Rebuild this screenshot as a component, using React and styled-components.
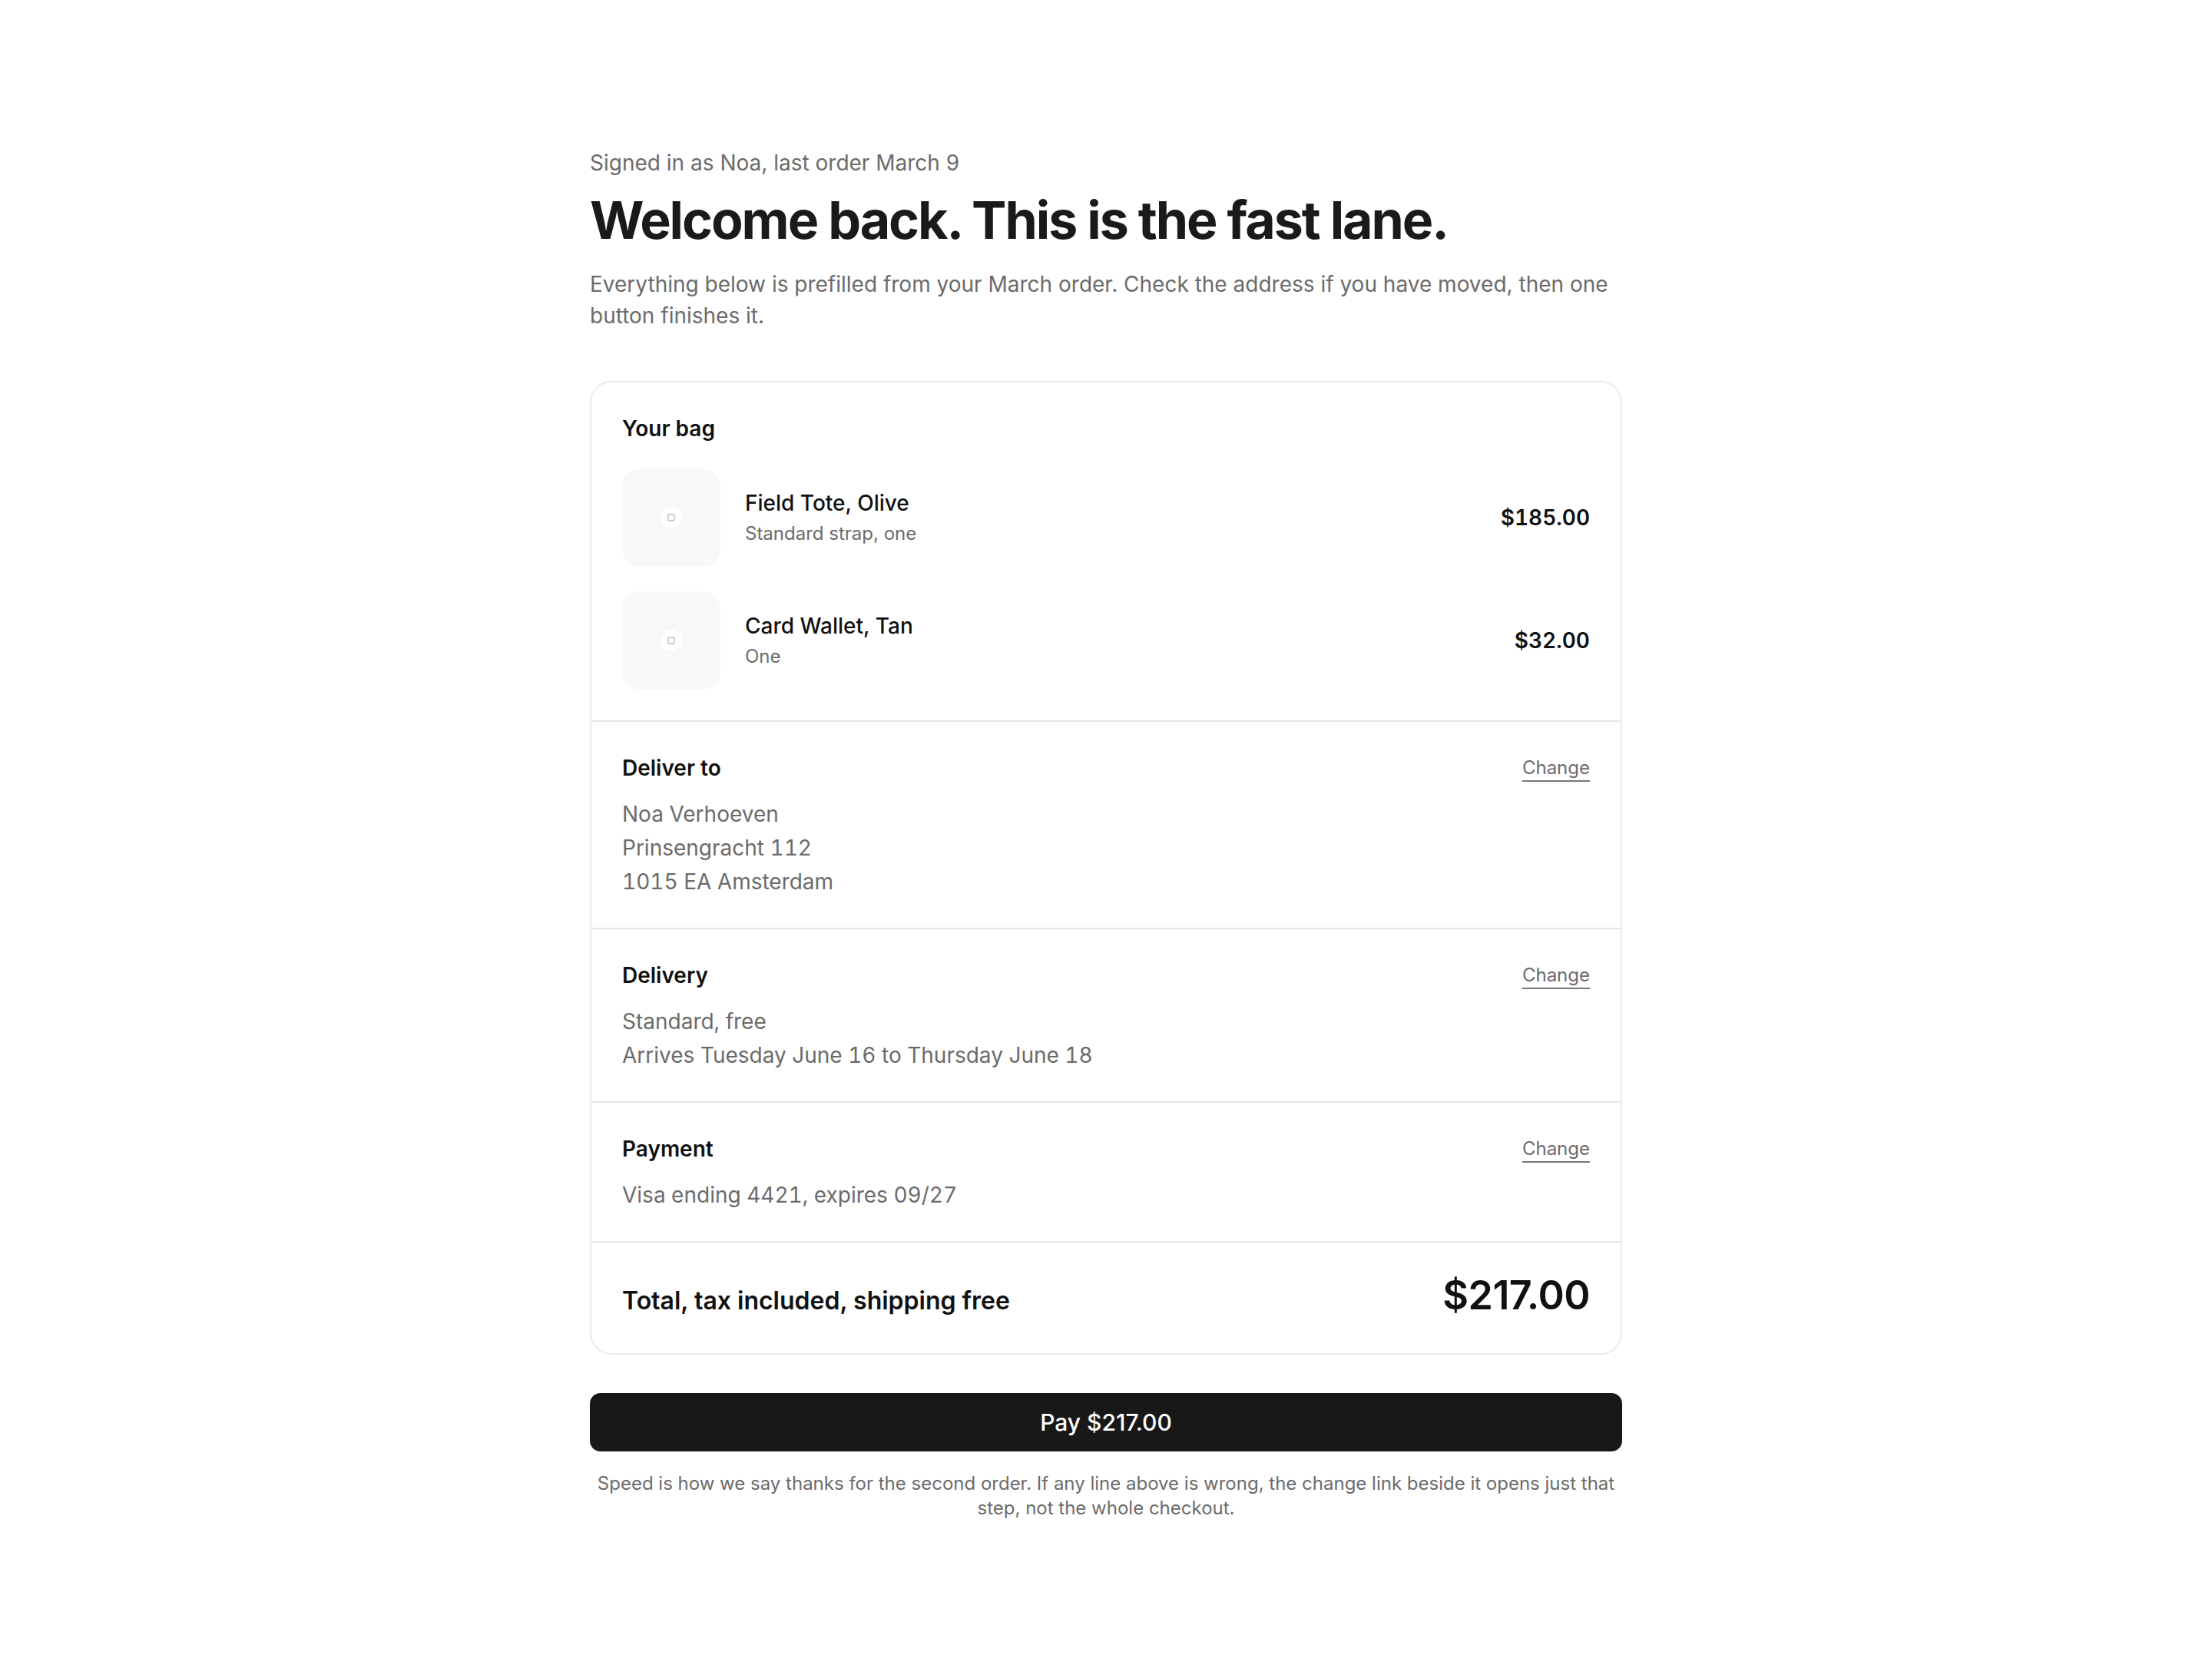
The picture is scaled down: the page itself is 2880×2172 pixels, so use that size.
import React from "react";
import styled, { createGlobalStyle } from "styled-components";

const bag = [
  { id: 1, name: "Field Tote, Olive", note: "Standard strap, one", price: "$185.00" },
  { id: 2, name: "Card Wallet, Tan", note: "One", price: "$32.00" },
];

const sections = [
  {
    id: "address",
    title: "Deliver to",
    lines: ["Noa Verhoeven", "Prinsengracht 112", "1015 EA Amsterdam"],
  },
  {
    id: "delivery",
    title: "Delivery",
    lines: ["Standard, free", "Arrives Tuesday June 16 to Thursday June 18"],
  },
  {
    id: "payment",
    title: "Payment",
    lines: ["Visa ending 4421, expires 09/27"],
  },
];

// the thumbnails hold a broken product image, only a faint glyph shows
const BrokenImage = () => (
  <svg width="28" height="28" viewBox="0 0 14 14" fill="none">
    <circle cx="7" cy="7" r="7" fill="#ffffff" />
    <rect x="5" y="5" width="4" height="4" rx="0.6" stroke="#bdbdbd" strokeWidth="0.7" />
  </svg>
);

const App = () => {
  return (
    <>
      <GlobalStyle />
      <Page>
        <Intro>
          <Eyebrow>Signed in as Noa, last order March 9</Eyebrow>
          <Title>Welcome back. This is the fast lane.</Title>
          <Lead>
            Everything below is prefilled from your March order. Check the address if you have
            moved, then one button finishes it.
          </Lead>
        </Intro>

        <Card>
          <Section>
            <SectionTitle>Your bag</SectionTitle>
            <ItemList>
              {bag.map((item) => (
                <Item key={item.id}>
                  <Thumb>
                    <BrokenImage />
                  </Thumb>
                  <ItemText>
                    <ItemName>{item.name}</ItemName>
                    <ItemNote>{item.note}</ItemNote>
                  </ItemText>
                  <ItemPrice>{item.price}</ItemPrice>
                </Item>
              ))}
            </ItemList>
          </Section>

          {sections.map((s) => (
            <Section key={s.id} $tight>
              <SectionHead>
                <SectionTitle>{s.title}</SectionTitle>
                <ChangeLink href="#">Change</ChangeLink>
              </SectionHead>
              <Lines>
                {s.lines.map((line) => (
                  <Line key={line}>{line}</Line>
                ))}
              </Lines>
            </Section>
          ))}

          <TotalRow>
            <TotalLabel>Total, tax included, shipping free</TotalLabel>
            <TotalAmount>$217.00</TotalAmount>
          </TotalRow>
        </Card>

        <PayButton type="button">Pay $217.00</PayButton>
        <Footnote>
          Speed is how we say thanks for the second order. If any line above is wrong, the change
          link beside it opens just that step, not the whole checkout.
        </Footnote>
      </Page>
    </>
  );
};

const GlobalStyle = createGlobalStyle`
  * { box-sizing: border-box; }
  body {
    margin: 0;
    background: #ffffff;
    color: #111111;
    font-family: Inter, "Noto Sans", "Liberation Sans", sans-serif;
    -webkit-font-smoothing: antialiased;
  }
`;

const Page = styled.main`
  max-width: 1344px;
  margin: 0 auto;
  padding: 192px 0 160px;
`;

const Intro = styled.header`
  display: flex;
  flex-direction: column;
  margin-bottom: 64px;
`;

const Eyebrow = styled.p`
  margin: 0;
  font-size: 28px;
  line-height: 40px;
  color: #6b6b6b;
`;

const Title = styled.h1`
  margin: 14px 0 0;
  font-size: 68px;
  line-height: 1.2;
  font-weight: 700;
  letter-spacing: -0.03em;
  color: #1a1a1a;
`;

const Lead = styled.p`
  margin: 22px 0 0;
  font-size: 28px;
  line-height: 41px;
  color: #6b6b6b;
`;

const Card = styled.section`
  border: 2px solid #ebebeb;
  border-radius: 28px;
  overflow: hidden;
`;

const Section = styled.div`
  padding: 40px 40px ${(p) => (p.$tight ? "38px" : "40px")};
  border-bottom: 2px solid #e6e6e6;
`;

const SectionHead = styled.div`
  display: flex;
  justify-content: space-between;
  align-items: center;
`;

const SectionTitle = styled.h2`
  margin: 0;
  font-size: 28px;
  line-height: 40px;
  font-weight: 600;
  color: #111111;
`;

const ChangeLink = styled.a`
  font-size: 24px;
  line-height: 40px;
  color: #6b6b6b;
  text-decoration: underline;
  text-decoration-color: #777777;
  text-decoration-thickness: 2px;
  text-underline-offset: 8px;
`;

const ItemList = styled.ul`
  list-style: none;
  margin: 32px 0 0;
  padding: 0;
  display: flex;
  flex-direction: column;
  gap: 32px;
`;

const Item = styled.li`
  display: flex;
  align-items: center;
  gap: 32px;
`;

const Thumb = styled.div`
  width: 128px;
  height: 128px;
  flex: none;
  border-radius: 24px;
  background: #f8f8f8;
  display: flex;
  align-items: center;
  justify-content: center;
`;

const ItemText = styled.div`
  flex: 1;
  display: flex;
  flex-direction: column;
  gap: 2px;
`;

const ItemName = styled.span`
  font-size: 28px;
  line-height: 40px;
  font-weight: 500;
  color: #111111;
`;

const ItemNote = styled.span`
  font-size: 24px;
  line-height: 36px;
  color: #6b6b6b;
`;

const ItemPrice = styled.span`
  font-size: 28px;
  font-weight: 600;
  color: #111111;
  font-variant-numeric: tabular-nums;
`;

const Lines = styled.div`
  margin-top: 18px;
  display: flex;
  flex-direction: column;
`;

const Line = styled.span`
  font-size: 28px;
  line-height: 44px;
  color: #6b6b6b;
  font-variant-numeric: tabular-nums;
`;

const TotalRow = styled.div`
  display: flex;
  justify-content: space-between;
  align-items: baseline;
  padding: 37px 40px 43px;
`;

const TotalLabel = styled.span`
  font-size: 32px;
  font-weight: 600;
  color: #111111;
`;

const TotalAmount = styled.span`
  font-size: 52px;
  line-height: 64px;
  font-weight: 600;
  letter-spacing: -0.01em;
  color: #111111;
`;

const PayButton = styled.button`
  display: block;
  width: 100%;
  margin-top: 50px;
  height: 76px;
  border: none;
  border-radius: 14px;
  background: #181818;
  color: #ffffff;
  font-family: inherit;
  font-size: 30px;
  font-weight: 500;
  cursor: pointer;
`;

const Footnote = styled.p`
  margin: 26px 0 0;
  font-size: 24px;
  line-height: 32px;
  text-align: center;
  color: #6b6b6b;
`;

export default App;
